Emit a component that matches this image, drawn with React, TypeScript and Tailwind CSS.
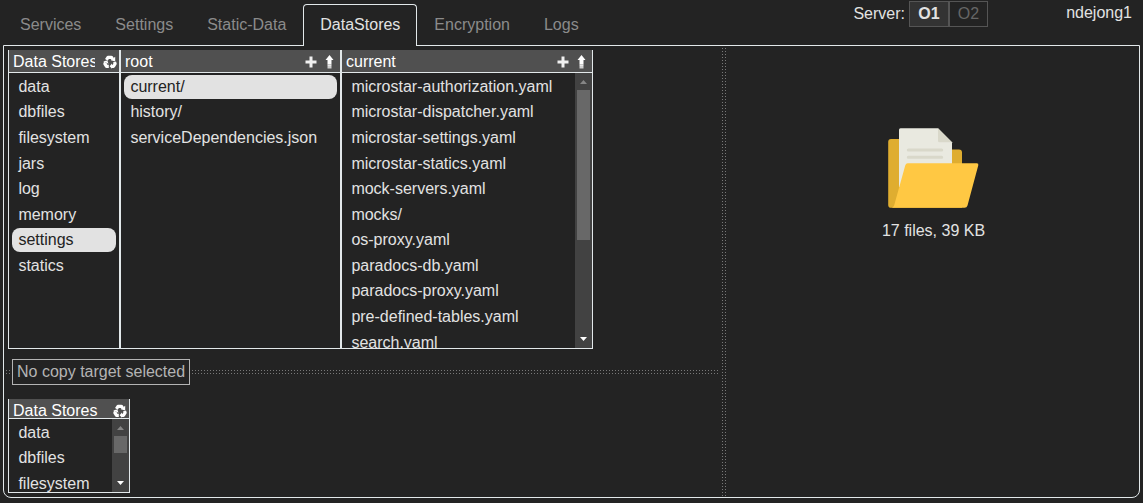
import React from "react";

const stores = ["data", "dbfiles", "filesystem", "jars", "log", "memory", "settings", "statics"];
const rootFiles = ["current/", "history/", "serviceDependencies.json"];
const currentFiles = [
  "microstar-authorization.yaml",
  "microstar-dispatcher.yaml",
  "microstar-settings.yaml",
  "microstar-statics.yaml",
  "mock-servers.yaml",
  "mocks/",
  "os-proxy.yaml",
  "paradocs-db.yaml",
  "paradocs-proxy.yaml",
  "pre-defined-tables.yaml",
  "search.yaml",
];
const tabs = ["Services", "Settings", "Static-Data", "DataStores", "Encryption", "Logs"];

function Recycle() {
  return (
    <svg className="h-[14px] w-[14px] shrink-0" viewBox="0 0 14 14">
      <g fill="none" stroke="#fff" strokeWidth="3.2" strokeLinejoin="round">
        <path d="M3.4 4.8 5 2.300h3.400l1.300 1.800" />
        <path d="M11.500 7l.6 1.800-1.500 2.500H8.500" />
        <path d="M5.800 11.300H3.500L1.900 8.800l.6-1.500" />
      </g>
      <g fill="#fff">
        <path d="M12.200 1.800v4.600L7.800 5.200z" />
        <path d="M9 8.600v5.200L6.600 11.200z" />
        <path d="M.2 6.200 4.300 5.400l1.200 3.400z" />
      </g>
    </svg>
  );
}

function Plus() {
  return (
    <svg className="h-[12px] w-[12px] shrink-0" viewBox="0 0 12 12">
      <path d="M4.5 0.5h3v4h4v3h-4v4h-3v-4h-4v-3h4z" fill="#f0f0f0" />
    </svg>
  );
}

function UpArrow() {
  return (
    <svg className="h-[14px] w-[9px] shrink-0" viewBox="0 0 9 14">
      <path d="M4.5 0 8.5 5H6.5V9.500h-4V5H.5z" fill="#fff" />
      <path d="M2.500 9.500h4v1.500h-4z" fill="#e8e8e8" />
      <path d="M2.500 11h4v2.500h-4z" fill="#d0d0d0" />
    </svg>
  );
}

function ScrollBar({ thumb }: { thumb: number }) {
  return (
    <div className="flex w-[17px] shrink-0 flex-col items-center bg-[#424242]">
      <div className="flex h-[17px] shrink-0 items-center justify-center">
        <svg className="h-[4px] w-[7px]" viewBox="0 0 7 4"><path d="M0 4 3.5 0 7 4z" fill="#868686" /></svg>
      </div>
      <div className="w-[13px] shrink-0 bg-[#686868]" style={{ height: thumb }} />
      <div className="grow" />
      <div className="flex h-[18px] shrink-0 items-center justify-center pb-px">
        <svg className="h-[4px] w-[7px]" viewBox="0 0 7 4"><path d="M0 0h7L3.5 4z" fill="#fff" /></svg>
      </div>
    </div>
  );
}

function Items({ items, selected }: { items: string[]; selected?: string }) {
  return (
    <div className="min-w-0 grow overflow-hidden px-[3px] pt-[0.95px]">
      {items.map((n) => (
        <div key={n} className="py-[0.8px]">
          <div
            className={
              "h-[24px] rounded-[8px] pl-[6.4px] leading-[24px] whitespace-nowrap " +
              (n === selected ? "bg-[#e2e2e2] text-[#232323]" : "text-[#e2e2e2]")
            }
          >
            {n}
          </div>
        </div>
      ))}
    </div>
  );
}

function Splitter() {
  return (
    <svg className="h-[4px] w-[712px]">
      <defs>
        <pattern id="hdots" width="3" height="3" patternUnits="userSpaceOnUse">
          <rect width="1" height="1" fill="#787878" />
        </pattern>
      </defs>
      <rect width="712" height="4" fill="url(#hdots)" />
    </svg>
  );
}

function Folder() {
  return (
    <svg className="h-[82px] w-[92px]" viewBox="888 127 92 82">
      <path d="M891 139h30l6 10.5h32q3 0 3 3V207.7H891q-2.8 0-2.8-2.8V142q0-3 2.8-3z" fill="#dfad30" />
      <path d="M900.5 128.2H938l14 14V187h-53v-57.3q0-1.5 1.5-1.5z" fill="#e9e9e0" />
      <path d="M938 128.2l14 14h-12.5q-1.5 0-1.5-1.5z" fill="#d9d8ca" />
      <path d="M908.3 150h33.4M908.3 157.3h33.4" stroke="#d9d8ca" strokeWidth="3" strokeLinecap="round" />
      <path d="M907.8 163.3h69q2 0 1.5 2L967.5 205.4q-.6 2.3-3 2.3H891.5q2-.5 2.7-2.5L905.3 165.2q.5-1.9 2.5-1.9z" fill="#ffc843" />
    </svg>
  );
}

const header = "flex shrink-0 items-center border-b border-[#e2e8ea] bg-[#505050] pl-[4px] text-white";

export default function App() {
  return (
    <div className="flex h-[503px] w-[1143px] flex-col overflow-hidden bg-[#232323] font-['Liberation_Sans',Arial,sans-serif] text-[16px] leading-[18px] text-[#e2e2e2]">
      <div className="flex h-[46px] shrink-0 items-start pl-[3px]">
        <div className="z-10 flex pt-[4px]">
          {tabs.map((t) => (
            <div
              key={t}
              className={
                "rounded-t-[4px] border border-b-0 px-[16px] pt-[11px] " +
                (t === "DataStores" ? "h-[42px] border-[#e2e8ea] bg-[#232323] text-[#e2e2e2]" : "h-[41px] border-transparent text-[#8b8b8b]")
              }
            >
              {t}
            </div>
          ))}
        </div>
        <div className="ml-auto flex pt-px">
          <div className="pt-[4px] pr-[4px]">Server:</div>
          <div className="flex h-[26px] w-[40px] items-center justify-center border border-[#555] bg-[#333] font-bold">O1</div>
          <div className="flex h-[26px] w-[39px] items-center justify-center border border-[#555] text-[#666]">O2</div>
        </div>
        <div className="w-[155px] pt-[4px] pr-[11px] text-right">ndejong1</div>
      </div>
      <div className="-mt-px ml-[3px] flex h-[453px] w-[1137px] shrink-0 rounded-b-[8px] border border-[#e2e8ea]">
        <div className="flex w-[718px] shrink-0 flex-col pt-[4px]">
          <div className="ml-[4px] flex h-[299px] w-[585px] shrink-0 border-b border-[#e2e8ea]">
            <div className="flex w-[112px] shrink-0 flex-col border-x border-[#e2e8ea]">
              <div className={header + " h-[23px]"}>
                <div className="w-[82px] overflow-hidden pt-[2px] whitespace-nowrap">Data Stores</div>
                <div className="ml-auto pt-px pr-[2px]"><Recycle /></div>
              </div>
              <Items items={stores} selected="settings" />
            </div>
            <div className="flex w-[221px] shrink-0 flex-col border-x border-[#e2e8ea]">
              <div className={header + " h-[23px]"}>
                <div className="pt-[2px]">root</div>
                <div className="ml-auto flex items-center gap-[8px] pt-px pr-[6px]"><Plus /><UpArrow /></div>
              </div>
              <Items items={rootFiles} selected="current/" />
            </div>
            <div className="flex w-[252px] shrink-0 flex-col border-x border-[#e2e8ea]">
              <div className={header + " h-[23px]"}>
                <div className="pt-[2px]">current</div>
                <div className="ml-auto flex items-center gap-[8px] pt-px pr-[6px]"><Plus /><UpArrow /></div>
              </div>
              <div className="flex min-h-0 grow">
                <Items items={currentFiles} />
                <ScrollBar thumb={150} />
              </div>
            </div>
          </div>
          <div className="relative mt-[10px] flex h-[26px] shrink-0 items-center pl-[2px]">
            <Splitter />
            <div className="absolute left-[6px] top-0 bg-[#232323] px-[2px]">
              <div className="h-[26px] w-[178px] border border-[#b4b4b4] pl-[4px] leading-[24px] whitespace-nowrap text-[#b4b4b4]">
                No copy target selected
              </div>
            </div>
          </div>
          <div className="mt-[14px] ml-[4px] flex h-[94px] w-[122px] shrink-0 flex-col border border-t-0 border-[#e2e8ea]">
            <div className={header + " h-[20px]"}>
              <div className="pt-[5px]">Data Stores</div>
              <div className="ml-auto pt-[4px] pr-[2px]"><Recycle /></div>
            </div>
            <div className="flex min-h-0 grow">
              <Items items={stores} />
              <ScrollBar thumb={17} />
            </div>
          </div>
        </div>
        <svg className="mt-[2px] h-[448px] w-[4px] shrink-0">
          <defs>
            <pattern id="vdots" width="3" height="3" patternUnits="userSpaceOnUse">
              <rect width="1" height="1" fill="#787878" />
            </pattern>
          </defs>
          <rect width="4" height="448" fill="url(#vdots)" />
        </svg>
        <div className="flex grow flex-col items-center pt-[81px] pl-[2px]">
          <Folder />
          <div className="mt-[13px]">17 files, 39 KB</div>
        </div>
      </div>
    </div>
  );
}
